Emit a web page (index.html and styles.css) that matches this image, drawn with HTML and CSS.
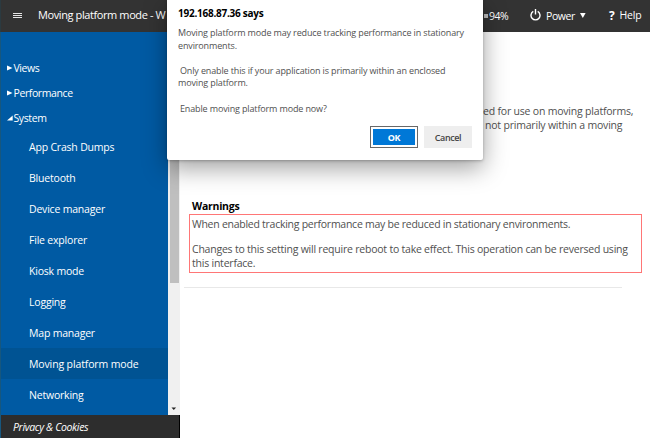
FILE: index.html
```
<!DOCTYPE html>
<html lang="en">
<head>
<meta charset="utf-8">
<title>Moving platform mode</title>
<link rel="stylesheet" href="styles.css">
</head>
<body>
<div class="app">
  <header class="topbar">
    <svg class="menu-icon" width="10" height="8" viewBox="0 0 10 8"><path d="M0 1.5h9M0 3.5h9M0 5.5h9" stroke="#e4e4e4" stroke-width="1"/></svg>
    <span class="page-title">Moving platform mode - W</span>
    <div class="tools">
      <span class="battery"><i class="battery-tip"></i><span>94%</span></span>
      <span class="power"><svg width="11" height="12" viewBox="0 0 11 12" fill="none" stroke="#fff" stroke-width="1.4"><path d="M3.3 2.4A4.5 4.5 0 1 0 7.7 2.4M5.5 0v5.6"/></svg><span>Power</span><svg class="caret" width="6" height="5" viewBox="0 0 6 5"><path d="M0 0h5.6L2.8 5z" fill="#fff"/></svg></span>
      <span class="help"><b>?</b><span>Help</span></span>
    </div>
  </header>
  <div class="body">
    <aside class="side">
      <div class="side-main">
        <nav class="nav">
          <div class="group"><svg width="6" height="6" viewBox="0 0 6 6"><path d="M0 .5 5.5 3 0 5.5z" fill="#fff"/></svg><span>Views</span></div>
          <div class="group"><svg width="6" height="6" viewBox="0 0 6 6"><path d="M0 .5 5.5 3 0 5.5z" fill="#fff"/></svg><span>Performance</span></div>
          <div class="group"><svg width="6" height="6" viewBox="0 0 6 6"><path d="M5.7 .5v5H0z" fill="#fff"/></svg><span>System</span></div>
          <div class="items">
            <a><span>App Crash Dumps</span></a>
            <a><span>Bluetooth</span></a>
            <a><span>Device manager</span></a>
            <a><span>File explorer</span></a>
            <a><span>Kiosk mode</span></a>
            <a><span>Logging</span></a>
            <a><span>Map manager</span></a>
            <a class="active"><span>Moving platform mode</span></a>
            <a><span>Networking</span></a>
          </div>
        </nav>
        <div class="scroll"><div class="thumb"></div><svg width="6" height="4" viewBox="0 0 6 4"><path d="M.5 .5h4.6L2.8 3z" fill="#222"/></svg></div>
      </div>
      <footer class="privacy"><span>Privacy &amp; Cookies</span></footer>
    </aside>
    <main class="content">
      <p class="intro"><span class="i1">ed for use on moving platforms,</span><br><span class="i2">not primarily within a moving</span></p>
      <h2><span>Warnings</span></h2>
      <div class="warning">
        <p><span class="w1">When enabled tracking performance may be reduced in stationary environments.</span></p>
        <p><span class="w2">Changes to this setting will require reboot to take effect. This operation can be reversed using</span><br><span class="w3">this interface.</span></p>
      </div>
      <hr>
    </main>
  </div>
  <div class="dialog">
    <h1><span>192.168.87.36 says</span></h1>
    <p><span>Moving platform mode may reduce tracking performance in stationary</span><br><span>environments.</span></p>
    <p><span class="lead">Only enable this if your application is primarily within an enclosed</span><br><span>moving platform.</span></p>
    <p><span class="lead">Enable moving platform mode now?</span></p>
    <div class="buttons"><button class="ok">OK</button><button class="cancel">Cancel</button></div>
  </div>
</div>
</body>
</html>
```
FILE: styles.css
```
* { box-sizing: border-box; }
body { margin: 0; font-family: "Open Sans", "Noto Sans", sans-serif; font-size: 10.5px; color: #505050; background: #fff; }
p, h1, h2 { margin: 0; white-space: nowrap; }
.app { position: relative; width: 650px; height: 438px; overflow: hidden; display: flex; flex-direction: column; }
.topbar { height: 32px; flex: none; background: #333; color: #fff; display: flex; align-items: center; padding-left: 12px; border-left: 1px solid #2b3a40; }
.menu-icon { margin-top: -1px; flex: none; }
.page-title { margin-left: 15px; margin-top: -3px; width: 129px; white-space: nowrap; font-size: 11px; letter-spacing: -.4px; }
.tools { margin-left: 317px; display: flex; align-items: center; white-space: nowrap; }
.battery { display: flex; align-items: center; width: 46px; font-size: 10.5px; letter-spacing: -.5px; }
.battery-tip { width: 4px; height: 4px; background: #bbb; margin-right: 1px; }
.power { display: flex; align-items: center; width: 79px; font-size: 10.5px; letter-spacing: -.4px; }
.power > svg:first-child { margin-top: -3px; }
.power span { margin-left: 5px; }
.power .caret { margin-left: 5px; margin-top: -1px; }
.help { display: flex; align-items: center; gap: 5px; font-size: 10.5px; letter-spacing: -.2px; margin-top: -2px; }
.help b { font-size: 12px; }
.body { flex: 1; display: flex; min-height: 0; }
.side { width: 180px; flex: none; display: flex; flex-direction: column; background: #005aa3; border-left: 1px solid #17577e; }
.side-main { height: 383px; display: flex; }
.nav { width: 167px; padding-top: 23px; color: #fff; }
.group { height: 25.3px; display: flex; align-items: center; padding-left: 6px; letter-spacing: -.4px; }
.group svg { margin-right: .5px; }
.items a { height: 31px; display: flex; align-items: center; padding: 1px 0 0 28px; letter-spacing: -.2px; }
.items .active { background: #005393; letter-spacing: -.13px; }
.scroll { width: 12px; background: #f0f0f0; display: flex; flex-direction: column; align-items: center; justify-content: space-between; padding-bottom: 4px; }
.thumb { width: 9px; height: 251px; background: #bfbfbf; }
.privacy { flex: 1; background: #2d2d2d; color: #fff; font-style: italic; font-size: 10.5px; letter-spacing: -.35px; padding: 5px 0 0 12px; line-height: 15px; border-right: 1px solid #000; }
.content { flex: 1; min-width: 0; padding: 72px 8px 0 9px; }
.intro { line-height: 14px; padding-left: 294px; letter-spacing: -.2px; }
.i2 { margin-left: 2px; }
h2 { font-size: 10.5px; letter-spacing: -.25px; color: #000; line-height: 14px; margin: 67px 0 1px 3px; }
.warning { height: 59px; border: 1px solid #ff7676; padding: 2px; line-height: 14px; letter-spacing: -.26px; }
.warning p + p { margin-top: 11px; letter-spacing: -.22px; }
hr { border: 0; height: 1px; background: #e8e8e8; margin: 14px 20px 0 -5px; }
.dialog { position: absolute; left: 167px; top: 0; width: 316px; height: 160px; background: #fff; border-radius: 0 0 2px 2px; box-shadow: 0 8px 25px rgba(0,0,0,.38), 0 1px 3px rgba(0,0,0,.25); padding: 6px 11px; }
.dialog h1 { font-size: 10px; letter-spacing: -.25px; color: #000; line-height: 14px; margin-bottom: 7px; }
.dialog p { font-size: 9px; letter-spacing: -.14px; line-height: 12.6px; margin-bottom: 12.7px; }
.lead { margin-left: 2px; }
.buttons { position: absolute; right: 11px; top: 126px; display: flex; gap: 6px; }
.buttons button { width: 48px; height: 22px; border: 0; padding: 0; font: 600 9px "Open Sans", sans-serif; letter-spacing: -.4px; color: #444; background: #eee; }
.buttons .ok { background: #0078d7; color: #fff; border: 1px solid #686868; box-shadow: inset 0 0 0 2px #fff; font-weight: 700; }
```
